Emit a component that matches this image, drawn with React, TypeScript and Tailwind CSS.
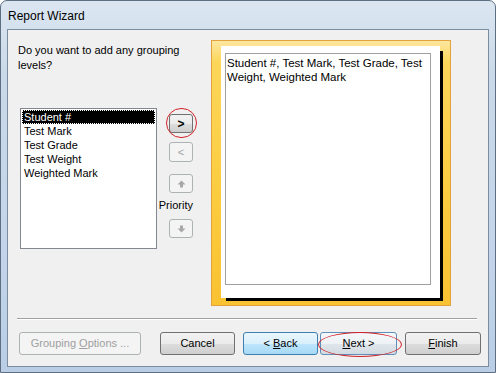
const fieldNames = ["Student #", "Test Mark", "Test Grade", "Test Weight", "Weighted Mark"];

const btnBase =
  "flex items-center justify-center whitespace-nowrap rounded-[3px] border text-[11px] leading-none";
const btnNormal =
  "border-[#707070] bg-[linear-gradient(to_bottom,#f2f2f2_0%,#ebebeb_50%,#dddddd_51%,#cfcfcf_100%)] text-black";
const btnDisabled = "border-[#adb2b5] bg-[#f4f4f4] text-[#a0a0a0]";
const btnHot =
  "border-[#3c7fb1] bg-[linear-gradient(to_bottom,#eaf6fd_0%,#d9f0fc_50%,#bee6fd_51%,#a7d9f5_100%)] text-black";
const btnDefault =
  "border-[#5d8fb8] bg-[linear-gradient(to_bottom,#f5f8fb_0%,#eef2f5_50%,#e0e6eb_51%,#d3dbe2_100%)] text-black";

const ArrowIcon = ({ down = false }: { down?: boolean }) => (
  <svg width="9" height="8" viewBox="0 0 9 8" className={down ? "rotate-180" : ""}>
    <path d="M4.5 0.5 L8.5 4.5 L6 4.5 L6 7.5 L3 7.5 L3 4.5 L0.5 4.5 Z" fill="#a8a8a8" />
  </svg>
);

export default function App() {
  return (
    <div
      className="relative w-[496px] h-[373px] overflow-hidden text-black"
      style={{ fontFamily: '"Liberation Sans", Arial, sans-serif' }}
    >
      {/* Window frame */}
      <div className="w-[496px] h-[373px] rounded-t-[7px] border border-[#5e6f82] bg-[linear-gradient(to_bottom,#dbe6f1_0%,#cad9e9_20%,#c4d6ea_60%,#b9cee5_100%)] px-[6px] pb-[5px] flex flex-col">
        <div className="h-[28px] flex items-center pl-[1px] text-[12px] leading-none pt-[1px]">
          Report Wizard
        </div>

        {/* Client area */}
        <div className="flex-1 border border-[#7b8ba0] bg-[#f0f0f0] flex flex-col">
          <div className="flex pt-[10px]">
            {/* Left column */}
            <div className="ml-[10px] w-[139px] flex flex-col">
              <p className="text-[11px] leading-[15px] pt-[3px] whitespace-nowrap">
                Do you want to add any grouping
                <br />
                levels?
              </p>
              <div className="mt-[35px] ml-[2px] w-[137px] h-[141px] border border-[#828790] bg-white p-[1px]">
                {fieldNames.map((name, i) => (
                  <div
                    key={name}
                    className={`h-[14px] pl-[2px] text-[11px] leading-[14px] whitespace-nowrap ${
                      i === 0
                        ? "bg-black text-white outline-1 outline-dotted outline-white -outline-offset-1"
                        : ""
                    }`}
                  >
                    {name}
                  </div>
                ))}
              </div>
            </div>

            {/* Move buttons */}
            <div className="w-[36px] flex flex-col items-end pt-[74px]">
              <div className={`${btnBase} ${btnNormal} w-[24px] h-[19px] font-bold text-[12px]`}>&gt;</div>
              <div className={`${btnBase} ${btnDisabled} w-[24px] h-[20px] mt-[9px]`}>&lt;</div>
              <div className={`${btnBase} ${btnDisabled} w-[24px] h-[19px] mt-[12px]`}>
                <ArrowIcon />
              </div>
              <div className="mt-[5px] text-[11px] leading-[15px]">Priority</div>
              <div className={`${btnBase} ${btnDisabled} w-[24px] h-[19px] mt-[6px]`}>
                <ArrowIcon down />
              </div>
            </div>

            {/* Preview */}
            <div className="ml-[18px] w-[240px] h-[266px] border border-[#e2a23e] bg-[linear-gradient(to_bottom,#fde7a0_0%,#fdd65a_8%,#fbcc3e_60%,#f9c232_100%)] pt-[5px] pl-[9px]">
              <div className="w-[219px] h-[252px] bg-white shadow-[4px_4px_0_-1px_#000] pt-[7px] pl-[4px]">
                <div className="w-[206px] h-[232px] border border-[#a0a0a0] px-[1px] pt-[2px] text-[11.5px] leading-[14px] whitespace-nowrap">
                  Student #, Test Mark, Test Grade, Test
                  <br />
                  Weight, Weighted Mark
                </div>
              </div>
            </div>
          </div>

          {/* Separator */}
          <div className="mt-[12px] ml-[9px] mr-[11px] h-[2px] border-t border-[#a0a0a0] border-b border-b-white" />

          {/* Bottom buttons */}
          <div className="flex mt-[12px] ml-[11px]">
            <div className={`${btnBase} ${btnDisabled} w-[122px] h-[23px] text-[#8d8d8d]`}>
              <span>
                Grouping <span className="underline">O</span>ptions ...
              </span>
            </div>
            <div className={`${btnBase} ${btnNormal} w-[75px] h-[23px] ml-[19px]`}>Cancel</div>
            <div className={`${btnBase} ${btnHot} w-[75px] h-[23px] ml-[8px]`}>
              <span>
                &lt; <span className="underline">B</span>ack
              </span>
            </div>
            <div className={`${btnBase} ${btnDefault} w-[77px] h-[23px] ml-[2px]`}>
              <span>
                <span className="underline">N</span>ext &gt;
              </span>
            </div>
            <div className={`${btnBase} ${btnNormal} w-[76px] h-[23px] ml-[8px]`}>
              <span>
                <span className="underline">F</span>inish
              </span>
            </div>
          </div>
        </div>
      </div>

      {/* Red annotation ellipses */}
      <div className="absolute left-[166px] top-[108px] w-[31px] h-[30px] rounded-full border border-[#d2232a] pointer-events-none" />
      <div className="absolute left-[318px] top-[332px] w-[84px] h-[25px] rounded-[50%] border border-[#d2232a] pointer-events-none" />
    </div>
  );
}
